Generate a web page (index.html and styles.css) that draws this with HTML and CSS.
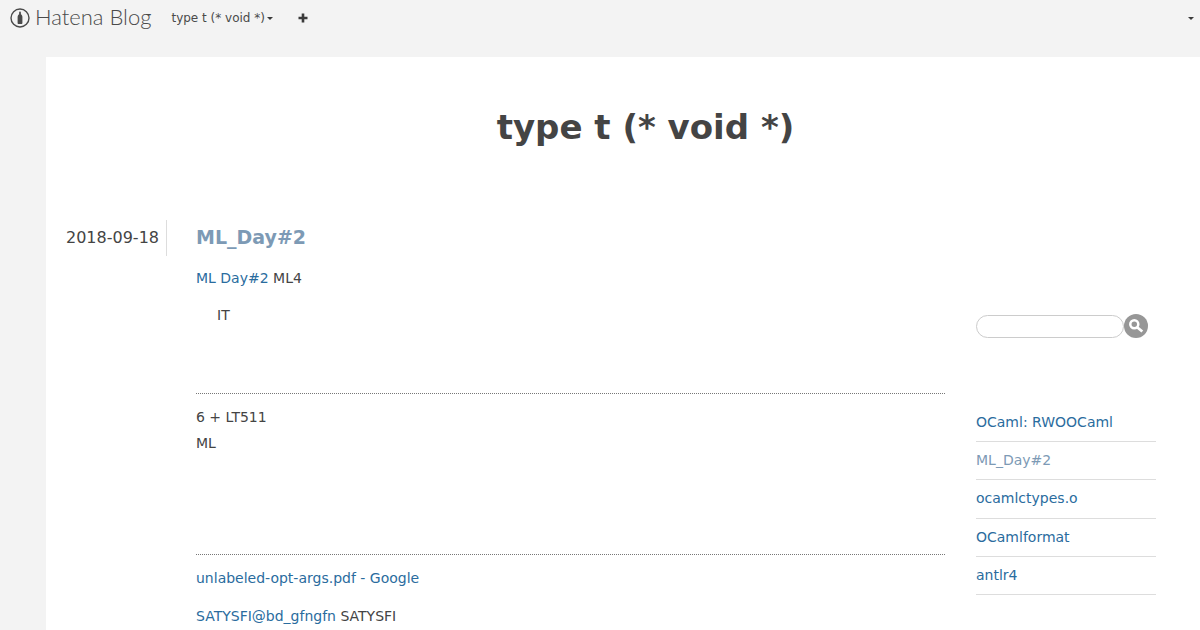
FILE: index.html
```html
<!DOCTYPE html>
<html lang="en">
<head>
    <meta charset="UTF-8">
    <meta name="viewport" content="width=device-width, initial-scale=1.0">
    <title>type t (* void *)</title>
    <link rel="stylesheet" href="styles.css">
</head>
<body>
    <div class="navbar">
        <a class="logo" href="#">
            <svg class="logo-mark" width="20" height="20" viewBox="0 0 20 20">
                <circle cx="10" cy="10" r="9" fill="none" stroke="#4a4a4a" stroke-width="1.4"/>
                <path d="M10 3.6c.7 0 .9.6.9 1.4v1.2c1 .7 1.5 1.6 1.5 2.8V15c0 .6-.4 1-1 1H8.600c-.6 0-1-.4-1-1V9c0-1.200.5-2.100 1.500-2.800V5c0-.8.2-1.400.9-1.400z" fill="#4a4a4a"/>
            </svg>
            <span class="logo-text">Hatena Blog</span>
        </a>
        <a class="blog-menu" href="#">type t (* void *)<span class="caret"></span></a>
        <a class="plus" href="#">
            <svg width="10" height="10" viewBox="0 0 10 10"><path d="M5 .5v9M.5 5h9" stroke="#3a3a3a" stroke-width="2.600" fill="none"/></svg>
        </a>
        <span class="user-caret"></span>
    </div>

    <div class="container">
        <h1 class="blog-title">type t (* void *)</h1>
        <div class="columns">
            <div class="main">
                <div class="entry-date">2018-09-18</div>
                <div class="entry">
                    <h2 class="entry-title">ML_Day#2</h2>
                    <p class="first"><a href="#">ML Day#2</a> ML4</p>
                    <p class="indent">IT</p>
                    <hr class="sep sep-one">
                    <p class="tight">6 + LT511</p>
                    <p class="tight">ML</p>
                    <hr class="sep sep-two">
                    <p class="link-line"><a href="#">unlabeled-opt-args.pdf - Google</a></p>
                    <p class="link-line"><a href="#">SATYSFI@bd_gfngfn</a> SATYSFI</p>
                </div>
            </div>
            <div class="sidebar">
                <form class="search">
                    <input class="search-input" type="text">
                    <button class="search-btn" type="button">
                        <svg width="16" height="16" viewBox="0 0 14 14">
                            <circle cx="5.500" cy="5.500" r="3.500" fill="none" stroke="#fff" stroke-width="2.200"/>
                            <path d="M8.300 8.300l4.200 3.500" stroke="#fff" stroke-width="2.400" fill="none"/>
                        </svg>
                    </button>
                </form>
                <ul class="recent">
                    <li><a href="#">OCaml: RWOOCaml</a></li>
                    <li><a class="current" href="#">ML_Day#2</a></li>
                    <li><a href="#">ocamlctypes.o</a></li>
                    <li><a href="#">OCamlformat</a></li>
                    <li><a href="#">antlr4</a></li>
                </ul>
            </div>
        </div>
    </div>
</body>
</html>
```
FILE: styles.css
```css
html, body {
    height: 630px;
    overflow: hidden;
}
body {
    font-family: "DejaVu Sans", sans-serif;
    font-size: 14px;
    color: #444;
    background-color: #f3f3f3;
    margin: 0;
}
a {
    color: #2a6c9e;
    text-decoration: none;
}
.navbar {
    display: flex;
    align-items: center;
    height: 36px;
    padding-left: 10px;
    position: relative;
}
.logo {
    display: flex;
    align-items: center;
    gap: 5px;
    color: #4a4a4a;
}
.logo-text {
    margin-top: -3px;
    font-family: "Lato", sans-serif;
    font-weight: 300;
    font-size: 22px;
    color: #4a4a4a;
}
.blog-menu {
    margin-left: 20px;
    font-size: 12px;
    color: #4a4a4a;
}
.caret {
    display: inline-block;
    margin-left: 2px;
    vertical-align: middle;
    border-top: 3px solid #3a3a3a;
    border-left: 3px solid transparent;
    border-right: 3px solid transparent;
}
.plus {
    display: flex;
    margin-left: 25px;
}
.user-caret {
    margin-left: auto;
    margin-right: 6px;
    border-top: 3px solid #3a3a3a;
    border-left: 3px solid transparent;
    border-right: 3px solid transparent;
}
.container {
    margin: 21px 0 0 46px;
    background: #fff;
    height: 573px;
}
.blog-title {
    margin: 0;
    padding: 47px 0 0 45px;
    height: 116px;
    font-size: 34px;
    line-height: 46px;
    text-align: center;
    color: #444;
}
.columns {
    display: flex;
    padding-left: 20px;
}
.main {
    display: flex;
    width: 880px;
}
.entry-date {
    width: 101px;
    height: 36px;
    border-right: 1px solid #ddd;
    font-size: 16px;
    line-height: 36px;
    white-space: nowrap;
    box-sizing: border-box;
}
.entry {
    width: 749px;
    margin-left: 29px;
    flex-shrink: 0;
}
.entry-title {
    margin: 0;
    font-size: 19px;
    line-height: 34px;
    color: #7d9ab5;
}
.entry p {
    margin: 0;
}
.entry .first {
    margin-top: 12px;
    line-height: 24px;
}
.entry .indent {
    margin-top: 13px;
    padding-left: 21px;
    line-height: 24px;
}
.sep {
    margin: 0;
    border: 0;
    border-top: 1px dotted #777;
}
.sep-one {
    margin-top: 66px;
}
.entry .tight {
    line-height: 26px;
}
.sep-one + .tight {
    margin-top: 10px;
}
.sep-two {
    margin-top: 98px;
    margin-bottom: 11px;
}
.entry .link-line {
    line-height: 24px;
    margin-bottom: 14px;
}
.sidebar {
    width: 180px;
    margin-left: 30px;
    padding-top: 93px;
}
.search {
    display: flex;
    align-items: center;
    height: 26px;
    margin: 0 0 -2px;
}
.search-input {
    width: 148px;
    height: 23px;
    padding: 0 10px;
    box-sizing: border-box;
    border: 1px solid #ccc;
    border-radius: 12px;
    background: #fff;
}
.search-btn {
    display: flex;
    align-items: center;
    justify-content: center;
    width: 24px;
    height: 24px;
    margin-left: 0;
    padding: 0;
    border: none;
    border-radius: 50%;
    background-color: #979797;
}
.recent {
    list-style: none;
    margin: 66.800px 0 0;
    padding: 0;
}
.recent li {
    height: 38.250px;
    line-height: 36px;
    border-bottom: 1px solid #ddd;
    box-sizing: border-box;
}
.current {
    color: #7d9ab5;
}
```
